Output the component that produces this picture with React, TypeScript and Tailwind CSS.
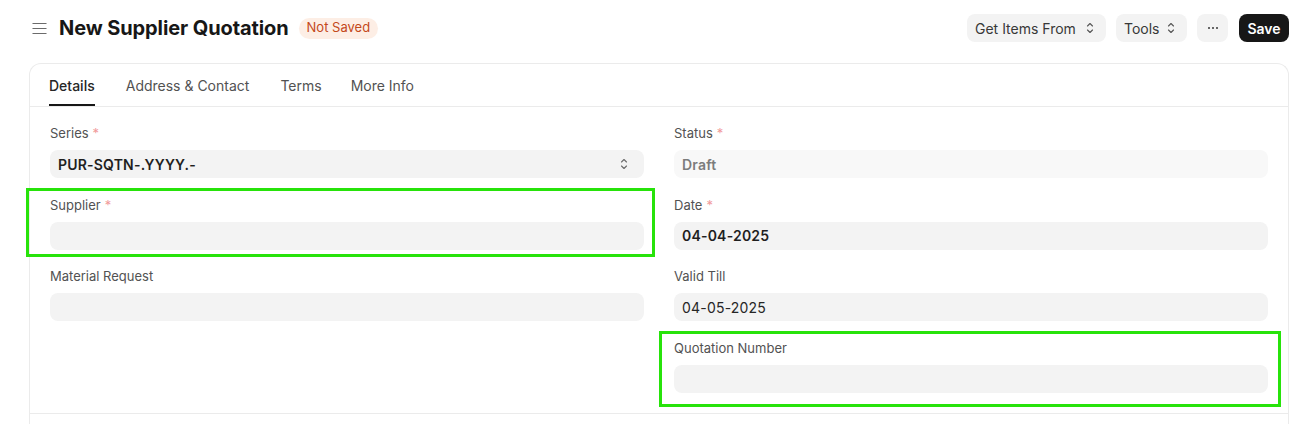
import React from "react";

const font = { fontFamily: "Inter, 'Noto Sans', sans-serif" };

function UpDown({ className = "" }: { className?: string }) {
  return (
    <svg width="8" height="12" viewBox="0 0 8 12" fill="none" className={className}>
      <path d="M1.5 4 L4 1.5 L6.5 4" stroke="currentColor" strokeWidth="1.1" strokeLinecap="round" strokeLinejoin="round" />
      <path d="M1.5 8 L4 10.5 L6.5 8" stroke="currentColor" strokeWidth="1.1" strokeLinecap="round" strokeLinejoin="round" />
    </svg>
  );
}

function Label({ text, req }: { text: string; req?: boolean }) {
  return (
    <div className="h-[18px] text-[13px] leading-[18px] text-[#525252]">
      {text}
      {req && <span className="text-[#f19a9a] ml-[4px]">*</span>}
    </div>
  );
}

function Field({
  label,
  req,
  value,
  valueClass = "font-semibold text-[#1f1f1f]",
  bg = "bg-[#f3f3f3]",
  select,
  children,
}: {
  label: string;
  req?: boolean;
  value?: string;
  valueClass?: string;
  bg?: string;
  select?: boolean;
  children?: React.ReactNode;
}) {
  return (
    <div className="relative mb-[17.6px]">
      {children}
      <Label text={label} req={req} />
      <div className={`mt-[8px] h-[28px] rounded-[8px] ${bg} flex items-center px-[8px] text-[14px] tracking-[0.2px]`}>
        <span className={valueClass}>{value}</span>
        {select && (
          <span className="ml-auto mr-[8px] text-[#6b6b6b]">
            <UpDown />
          </span>
        )}
      </div>
    </div>
  );
}

export default function App() {
  return (
    <div className="w-[1315px] h-[424px] bg-white overflow-hidden" style={font}>
      {/* Header */}
      <div className="flex items-center h-[56px] pl-[32px] pr-[26px]">
        <svg width="15" height="13" viewBox="0 0 15 13" className="text-[#6b6b6b]">
          <path d="M0.5 1.5 H14.5 M0.5 6.5 H14.5 M0.5 11.5 H14.5" stroke="currentColor" strokeWidth="1.2" />
        </svg>
        <div className="ml-[12px] text-[20px] font-bold text-[#171717] tracking-[-0.1px]">New Supplier Quotation</div>
        <div className="ml-[10px] h-[21px] px-[8px] rounded-full bg-[#fdeee5] text-[#c4491b] text-[13px] flex items-center">
          Not Saved
        </div>
        <div className="ml-auto flex items-center">
          <button className="w-[139px] h-[28px] rounded-[8px] bg-[#f3f3f3] pl-[8px] pr-[12px] flex items-center justify-between text-[14px] text-[#383838]">
            Get Items From
            <UpDown className="text-[#555]" />
          </button>
          <button className="ml-[10px] w-[71px] h-[28px] rounded-[8px] bg-[#f3f3f3] pl-[8px] pr-[12px] flex items-center justify-between text-[14px] text-[#383838]">
            Tools
            <UpDown className="text-[#555]" />
          </button>
          <button className="ml-[10px] w-[31px] h-[28px] rounded-[8px] bg-[#f3f3f3] flex items-center justify-center text-[#383838]">
            <svg width="12" height="4" viewBox="0 0 12 4">
              <circle cx="2" cy="2" r="1" fill="currentColor" />
              <circle cx="6" cy="2" r="1" fill="currentColor" />
              <circle cx="10" cy="2" r="1" fill="currentColor" />
            </svg>
          </button>
          <button className="ml-[11px] w-[50px] h-[28px] rounded-[8px] bg-[#171717] text-white text-[14px] font-semibold flex items-center justify-center">
            Save
          </button>
        </div>
      </div>

      {/* Card */}
      <div className="ml-[29px] mt-[7px] w-[1260px] border border-[#ebebeb] rounded-t-[12px] border-b-0">
        {/* Tabs */}
        <div className="h-[43px] flex items-end px-[19px] border-b border-[#ebebeb]">
          <div className="h-full flex items-center relative text-[14px] font-medium text-[#262626]">
            Details
            <div className="absolute left-0 right-0 bottom-[0px] h-[2px] bg-[#171717]" />
          </div>
          <div className="ml-[31px] h-full flex items-center text-[14px] text-[#525252]">Address &amp; Contact</div>
          <div className="ml-[31px] h-full flex items-center text-[14px] text-[#525252]">Terms</div>
          <div className="ml-[29px] h-full flex items-center text-[14px] text-[#525252]">More Info</div>
        </div>

        {/* Form */}
        <div className="grid grid-cols-2 gap-x-[30px] px-[20px] pt-[17px] pb-[3px] border-b border-[#ebebeb]">
          <div>
            <Field label="Series" req value="PUR-SQTN-.YYYY.-" select />
            <Field label="Supplier" req>
              <div className="absolute left-[-24px] right-[-11px] top-[-8px] bottom-[-7px] border-[3px] border-[#27e30a] pointer-events-none" />
            </Field>
            <Field label="Material Request" />
          </div>
          <div>
            <Field
              label="Status"
              req
              value="Draft"
              bg="bg-[#f8f8f8]"
              valueClass="font-semibold text-[#7c7c7c]"
            />
            <Field label="Date" req value="04-04-2025" valueClass="font-semibold text-[#1f1f1f]" />
            <Field label="Valid Till" value="04-05-2025" valueClass="font-normal text-[#262626]" />
            <Field label="Quotation Number">
              <div className="absolute left-[-15px] right-[-13px] top-[-8px] bottom-[-14px] border-[3px] border-[#27e30a] pointer-events-none" />
            </Field>
          </div>
        </div>
        <div className="h-[20px]" />
      </div>
    </div>
  );
}
